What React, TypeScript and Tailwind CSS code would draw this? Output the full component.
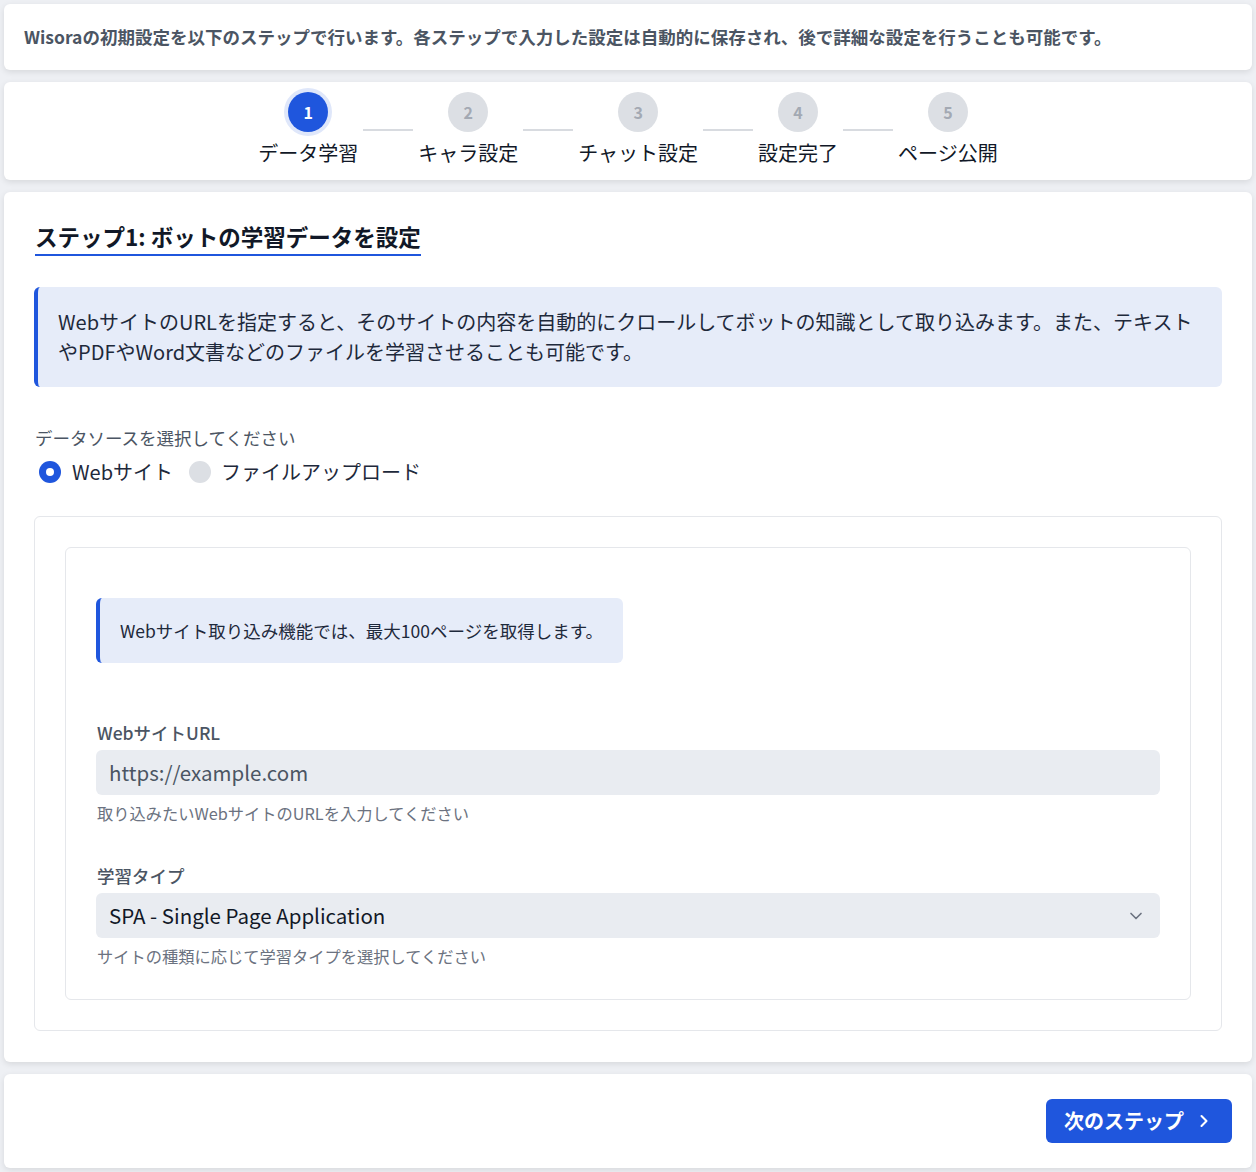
import { ChevronDown, ChevronRight } from "lucide-react";
import { clsx } from "clsx";

const steps = ["データ学習", "キャラ設定", "チャット設定", "設定完了", "ページ公開"];

export default function App() {
  const current = 0;

  return (
    <div className="min-h-screen bg-[#eef0f4] p-1 flex flex-col gap-3 font-['Noto_Sans_CJK_JP',sans-serif] text-[#1e293b]">
      {/* Intro */}
      <div className="bg-white rounded-md shadow-[0_2px_6px_rgba(0,0,0,0.1)] px-5 py-5">
        <p className="text-[17.5px] leading-[26px] font-bold text-[#4b5563]">
          Wisoraの初期設定を以下のステップで行います。各ステップで入力した設定は自動的に保存され、後で詳細な設定を行うことも可能です。
        </p>
      </div>

      {/* Stepper */}
      <div className="bg-white rounded-md shadow-[0_2px_6px_rgba(0,0,0,0.1)] pt-[10px] pb-[13px] flex justify-center">
        <div className="flex items-center gap-[5px]">
          {steps.map((label, i) => (
            <div key={label} className="flex items-center gap-[5px]">
              {i > 0 && <div className="w-[50px] h-[2px] bg-[#d8dbe0]" />}
              <div className="flex flex-col items-center">
                <div
                  className={clsx(
                    "w-10 h-10 rounded-full flex items-center justify-center text-[16px] font-semibold",
                    i === current
                      ? "bg-[#1f56dd] text-white ring-4 ring-[#dfe7fa]"
                      : "bg-[#dcdfe4] text-[#a3a9b3]"
                  )}
                >
                  {i + 1}
                </div>
                <div className="mt-[7px] text-[20px] leading-[28px] text-[#111827]">{label}</div>
              </div>
            </div>
          ))}
        </div>
      </div>

      {/* Step 1 */}
      <div className="bg-white rounded-md shadow-[0_2px_6px_rgba(0,0,0,0.1)] px-[30px] pt-[28px] pb-[31px]">
        <h2 className="inline-block border-b-2 border-[#1f56dd] text-[22.5px] leading-[32px] font-bold text-[#111827] ml-px pb-[2px]">
          ステップ1: ボットの学習データを設定
        </h2>

        <div className="mt-[31px] bg-[#e6ecf9] border-l-4 border-[#1f56dd] rounded-md pl-5 pr-6 py-5">
          <p className="text-[20px] leading-[30px] text-[#1e293b]">
            WebサイトのURLを指定すると、そのサイトの内容を自動的にクロールしてボットの知識として取り込みます。また、テキストやPDFやWord文書などのファイルを学習させることも可能です。
          </p>
        </div>

        <div className="mt-10 text-[17.5px] leading-[22px] text-[#4b5563] ml-px">データソースを選択してください</div>
        <div className="mt-[10px] flex items-center h-[26px] ml-[5px]">
          <span className="w-[22px] h-[22px] rounded-full bg-[#1f56dd] flex items-center justify-center">
            <span className="w-2 h-2 rounded-full bg-white" />
          </span>
          <span className="ml-[11px] text-[20px] text-[#1e293b]">Webサイト</span>
          <span className="ml-4 w-[22px] h-[22px] rounded-full bg-[#dcdfe4]" />
          <span className="ml-[10px] text-[20px] text-[#1e293b]">ファイルアップロード</span>
        </div>

        <div className="mt-[31px] border border-[#e5e7eb] rounded-md p-[30px]">
          <div className="border border-[#e5e7eb] rounded-md px-[30px] pt-[50px] pb-[32px]">
            <div className="w-fit bg-[#e6ecf9] border-l-4 border-[#1f56dd] rounded-md pl-5 pr-5 py-5">
              <p className="text-[17.5px] leading-[25px] text-[#1e293b]">Webサイト取り込み機能では、最大100ページを取得します。</p>
            </div>

            <div className="mt-[59px] text-[17.5px] leading-[22px] font-medium text-[#4b5563] ml-px">WebサイトURL</div>
            <div className="mt-[6px] h-[45px] rounded-md bg-[#e9ecf1] px-[13px] flex items-center text-[20.5px] text-[#4b5563]">
              https://example.com
            </div>
            <div className="mt-[7px] text-[16.25px] leading-[22px] text-[#6b7280] ml-px">取り込みたいWebサイトのURLを入力してください</div>

            <div className="mt-[41px] text-[17.5px] leading-[22px] font-medium text-[#4b5563] ml-px">学習タイプ</div>
            <div className="mt-[6px] h-[45px] rounded-md bg-[#e9ecf1] pl-[13px] pr-[14px] flex items-center justify-between text-[20.5px] text-[#111827]">
              <span>SPA - Single Page Application</span>
              <ChevronDown size={20} strokeWidth={2} className="text-[#6b7280]" />
            </div>
            <div className="mt-[7px] text-[16.25px] leading-[22px] text-[#6b7280] ml-px">サイトの種類に応じて学習タイプを選択してください</div>
          </div>
        </div>
      </div>

      {/* Footer */}
      <div className="bg-white rounded-md shadow-[0_2px_6px_rgba(0,0,0,0.1)] px-5 py-[25px] flex justify-end">
        <button className="h-[44px] rounded-md bg-[#1f56dd] text-white pl-[18px] pr-[18px] flex items-center gap-[10px] text-[20px] font-bold">
          次のステップ
          <ChevronRight size={20} strokeWidth={2.5} />
        </button>
      </div>
    </div>
  );
}
